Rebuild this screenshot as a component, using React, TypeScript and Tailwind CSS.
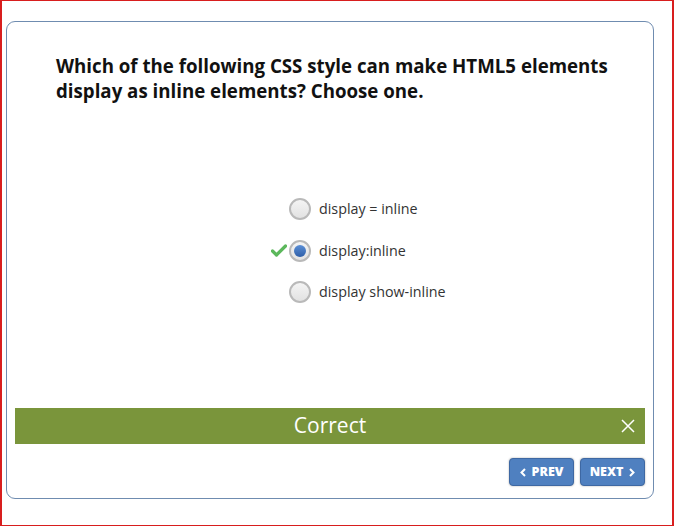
import React from "react";

const font = { fontFamily: '"Open Sans", "Liberation Sans", sans-serif' };

function Radio({ checked }: { checked?: boolean }) {
  return (
    <span className="relative flex h-[22px] w-[22px] items-center justify-center rounded-full border-2 border-[#b9b9b9] bg-gradient-to-b from-[#f4f4f4] to-[#e2e2e2]">
      {checked && (
        <span className="h-[12px] w-[12px] rounded-full bg-gradient-to-b from-[#5b8fd6] to-[#2f5fa8]" />
      )}
    </span>
  );
}

export default function App() {
  const options = [
    { label: "display = inline", checked: false },
    { label: "display:inline", checked: true },
    { label: "display show-inline", checked: false },
  ];
  return (
    <div style={font} className="h-[527px] w-[674px] bg-white">
      <div className="h-[526px] w-[674px] border-l-2 border-t border-r-2 border-b border-[#d81e1e] pt-[20px] pl-[4px] pr-[18px]">
        <div className="flex h-[478px] flex-col rounded-[9px] border border-[#6f8cb0] px-[8px]">
          <h1 className="pl-[41px] pt-[31px] text-[18.7px] font-bold leading-[25px] text-[#111]">
            Which of the following CSS style can make HTML5 elements
            <br />
            display as inline elements? Choose one.
          </h1>
          <div className="flex flex-col items-start gap-[19.5px] pl-[274px] pt-[95px]">
            {options.map((o) => (
              <div key={o.label} className="relative flex h-[22px] items-center gap-[8px]">
                {o.checked && (
                  <svg className="absolute left-[-18px] top-[4px]" width="16" height="13" viewBox="0 0 16 13">
                    <path d="M1.5 7 L5.5 11 L14.5 2" fill="none" stroke="#5cb85c" strokeWidth="3.2" strokeLinejoin="round" strokeLinecap="round" />
                  </svg>
                )}
                <Radio checked={o.checked} />
                <span className="text-[14.3px] text-[#333]">{o.label}</span>
              </div>
            ))}
          </div>
          <div className="mt-[105px] flex h-[36px] items-center justify-center bg-[#7a953b] relative">
            <span className="text-[21px] font-normal text-white">Correct</span>
            <svg className="absolute right-[10px] top-[11px]" width="14" height="14" viewBox="0 0 14 14">
              <path d="M1 1 L13 13 M13 1 L1 13" stroke="#fff" strokeWidth="1.5" />
            </svg>
          </div>
          <div className="mt-[14px] flex justify-end gap-[6px]">
            <button className="flex h-[28px] w-[65px] items-center justify-center gap-[6px] rounded-[4px] border border-[#3e68a3] bg-[#4f80c0] text-[12.5px] font-extrabold text-white shadow-[0_0_2px_rgba(0,0,0,0.35)]">
              <svg width="6" height="9" viewBox="0 0 6 9"><path d="M5 1 L1.5 4.5 L5 8" fill="none" stroke="#fff" strokeWidth="2" /></svg>
              PREV
            </button>
            <button className="flex h-[28px] w-[65px] items-center justify-center gap-[6px] rounded-[4px] border border-[#3e68a3] bg-[#4f80c0] text-[12.5px] font-extrabold text-white shadow-[0_0_2px_rgba(0,0,0,0.35)]">
              NEXT
              <svg width="6" height="9" viewBox="0 0 6 9"><path d="M1 1 L4.5 4.5 L1 8" fill="none" stroke="#fff" strokeWidth="2" /></svg>
            </button>
          </div>
        </div>
      </div>
    </div>
  );
}
